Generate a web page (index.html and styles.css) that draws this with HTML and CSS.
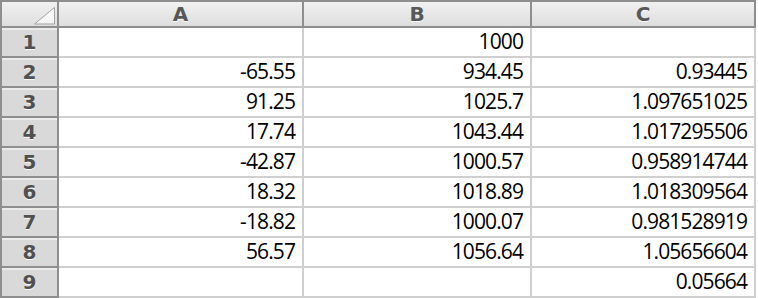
FILE: index.html
```html
<!DOCTYPE html>
<html>
<head>
<meta charset="utf-8">
<link rel="stylesheet" href="styles.css">
</head>
<body>
<div class="sheet">
  <div class="hdr corner">
    <svg class="tri" width="22" height="18" viewBox="0 0 22 18">
      <defs>
        <linearGradient id="g" x1="0" y1="0" x2="0" y2="1">
          <stop offset="0" stop-color="#ffffff"/>
          <stop offset="1" stop-color="#f2f2f2"/>
        </linearGradient>
      </defs>
      <polygon points="20.5,0.5 20.5,17 0.5,17" fill="url(#g)" stroke="#a3a3a3" stroke-width="1"/>
    </svg>
  </div>
  <div class="hdr col">A</div>
  <div class="hdr col">B</div>
  <div class="hdr col">C</div>

  <div class="rh">1</div><div class="cell"></div><div class="cell">1000</div><div class="cell"></div>
  <div class="rh">2</div><div class="cell">-65.55</div><div class="cell">934.45</div><div class="cell">0.93445</div>
  <div class="rh">3</div><div class="cell">91.25</div><div class="cell">1025.7</div><div class="cell">1.097651025</div>
  <div class="rh">4</div><div class="cell">17.74</div><div class="cell">1043.44</div><div class="cell">1.017295506</div>
  <div class="rh">5</div><div class="cell">-42.87</div><div class="cell">1000.57</div><div class="cell">0.958914744</div>
  <div class="rh">6</div><div class="cell">18.32</div><div class="cell">1018.89</div><div class="cell">1.018309564</div>
  <div class="rh">7</div><div class="cell">-18.82</div><div class="cell">1000.07</div><div class="cell">0.981528919</div>
  <div class="rh">8</div><div class="cell">56.57</div><div class="cell">1056.64</div><div class="cell">1.05656604</div>
  <div class="rh">9</div><div class="cell"></div><div class="cell"></div><div class="cell">0.05664</div>
</div>
</body>
</html>
```
FILE: styles.css
```css
* { box-sizing: border-box; }
html, body { margin: 0; padding: 0; background: #ffffff; }
.sheet {
  display: grid;
  grid-template-columns: 59px 245px 228px 224px;
  grid-template-rows: 28px repeat(9, 30px);
  width: 756px;
}
.hdr {
  border-top: 2px solid #8e8e8e;
  border-bottom: 2px solid #8e8e8e;
  border-right: 2px solid #8e8e8e;
  background: linear-gradient(#f1f1f1, #dedede);
  font-family: "DejaVu Sans", sans-serif;
  font-weight: bold;
  font-size: 20px;
  line-height: 24px;
  color: #585858;
  text-align: center;
  text-shadow: 0 1px 0 rgba(255,255,255,0.85);
}
.corner {
  border-left: 2px solid #8e8e8e;
  display: flex;
  justify-content: flex-end;
  align-items: flex-end;
  padding: 0 1px 1px 0;
}
.tri { display: block; }
.rh {
  border-left: 2px solid #8e8e8e;
  border-right: 2px solid #8e8e8e;
  border-bottom: 2px solid #8e8e8e;
  background: #d9d9d9;
  box-shadow: inset 0 2px 0 #ebebeb;
  font-family: "DejaVu Sans", sans-serif;
  font-weight: bold;
  font-size: 20px;
  line-height: 28px;
  color: #505050;
  text-align: center;
  text-shadow: 0 1px 0 rgba(255,255,255,0.85);
}
.cell {
  border-right: 2px solid #cfcfcf;
  border-bottom: 2px solid #cfcfcf;
  font-family: "Open Sans", sans-serif;
  font-size: 21px;
  letter-spacing: -0.9px;
  line-height: 26px;
  padding: 0 7px 2px 0;
  color: #000000;
  text-align: right;
}
```
